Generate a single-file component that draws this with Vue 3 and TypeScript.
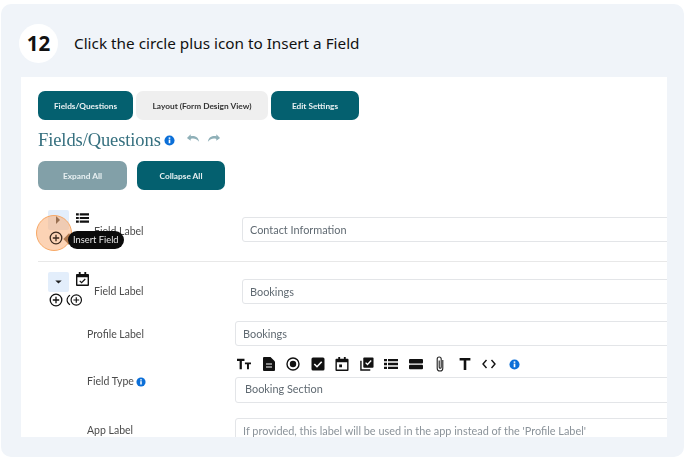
<script setup lang="ts">
const tabs = [
  { label: 'Fields/Questions', cls: 'tab-a' },
  { label: 'Layout (Form Design View)', cls: 'tab-b' },
  { label: 'Edit Settings', cls: 'tab-c' },
]
</script>

<template>
  <div class="page">
    <section class="card">
      <header class="step">
        <div class="badge">12</div>
        <h1 class="title">Click the circle plus icon to Insert a Field</h1>
      </header>
      <main class="panel">
        <nav class="tabs">
          <button v-for="t in tabs" :key="t.label" class="btn" :class="t.cls">{{ t.label }}</button>
        </nav>
        <div class="heading">
          <h2>Fields/Questions</h2>
          <svg class="info" viewBox="0 0 12 12"><circle cx="6" cy="6" r="5.5" fill="#0b6fd8" /><rect x="5.1" y="5" width="1.8" height="4" fill="#fff" /><rect x="5.1" y="2.6" width="1.8" height="1.6" fill="#fff" /></svg>
          <svg class="undo" viewBox="0 0 16 10"><path d="M5 1 1 5l4 3V6c3-1 6-.5 9 3-1-5-4-6.500-9-6z" fill="#8fb0b8" /></svg>
          <svg class="undo redo" viewBox="0 0 16 10"><path d="M5 1 1 5l4 3V6c3-1 6-.5 9 3-1-5-4-6.500-9-6z" fill="#8fb0b8" /></svg>
        </div>
        <div class="actions">
          <button class="btn expand">Expand All</button>
          <button class="btn collapse">Collapse All</button>
        </div>

        <div class="field first">
          <div class="ctrl">
            <div class="toggle"><svg class="caret-r" viewBox="0 0 6 8"><path d="M1 0v8l4-4z" fill="#222" /></svg></div>
            <svg class="type" viewBox="0 0 14 12"><path d="M0 1h3v2.300H0zM4 1h10v2.300H4zM0 4.800h3v2.400H0zM4 4.800h10v2.400H4zM0 8.700h3V11H0zM4 8.700h10V11H4z" fill="#111" /></svg>
          </div>
          <span class="flabel">Field Label</span>
          <div class="input wide">Contact Information</div>
          <div class="halo"></div>
          <svg class="plus plus-hi" viewBox="0 0 14 14"><circle cx="7" cy="7" r="5.800" fill="none" stroke="#3c2a1e" stroke-width="1.300" /><path d="M7 3.800v6.400M3.800 7h6.400" stroke="#3c2a1e" stroke-width="1.300" /></svg>
          <div class="tip">Insert Field</div>
        </div>

        <hr class="sep" />

        <div class="field second">
          <div class="ctrl">
            <div class="toggle"><svg class="caret-d" viewBox="0 0 8 5"><path d="M0 .5h8L4 4.500z" fill="#222" /></svg></div>
            <svg class="type cal" viewBox="0 0 14 15"><path d="M3 0h2v2h4V0h2v2h2a1 1 0 0 1 1 1v11a1 1 0 0 1-1 1H1a1 1 0 0 1-1-1V3a1 1 0 0 1 1-1h2zM1.500 5.500v8h11v-8z" fill="#111" /><path d="m4 9.500 2 2 4-4" fill="none" stroke="#111" stroke-width="1.300" /></svg>
          </div>
          <div class="plusses">
            <svg class="plus" viewBox="0 0 14 14"><circle cx="7" cy="7" r="5.800" fill="none" stroke="#111" stroke-width="1.300" /><path d="M7 3.800v6.400M3.800 7h6.400" stroke="#111" stroke-width="1.300" /></svg>
            <svg class="plus2" viewBox="0 0 19 14"><path d="M4.500 1.500C2.500 2.800 1.200 4.700 1.200 7s1.300 4.200 3.300 5.500" fill="none" stroke="#111" stroke-width="1.200" /><circle cx="11.500" cy="7" r="5.800" fill="none" stroke="#111" stroke-width="1.300" /><path d="M11.500 3.800v6.400M8.300 7h6.400" stroke="#111" stroke-width="1.300" /></svg>
          </div>
          <span class="flabel">Field Label</span>
          <div class="input wide">Bookings</div>
        </div>

        <div class="row profile">
          <label>Profile Label</label>
          <div class="input">Bookings</div>
        </div>

        <div class="palette">
          <svg viewBox="0 0 15 13"><path d="M0 1h8v2.200H5.200V12H2.800V3.200H0zM8.500 5H15v1.800h-2.200V12h-2.100V6.800H8.500z" fill="#111" /></svg>
          <svg viewBox="0 0 12 14"><path d="M0 1a1 1 0 0 1 1-1h6.500L12 4.500V13a1 1 0 0 1-1 1H1a1 1 0 0 1-1-1z" fill="#111" /><path d="M3 7h6M3 10h6" stroke="#fff" stroke-width="1.200" /></svg>
          <svg viewBox="0 0 14 14"><circle cx="7" cy="7" r="6" fill="none" stroke="#111" stroke-width="1.400" /><circle cx="7" cy="7" r="3.200" fill="#111" /></svg>
          <svg viewBox="0 0 14 14"><rect x="0.500" y="0.500" width="13" height="13" rx="1.500" fill="#111" /><path d="m3.300 7 2.700 2.700 4.700-5" fill="none" stroke="#fff" stroke-width="1.600" /></svg>
          <svg viewBox="0 0 14 15"><path d="M3 0h2v2h4V0h2v2h2a1 1 0 0 1 1 1v11a1 1 0 0 1-1 1H1a1 1 0 0 1-1-1V3a1 1 0 0 1 1-1h2zM1.500 5.500v8h11v-8z" fill="#111" /><rect x="4" y="8" width="3" height="3" fill="#111" /></svg>
          <svg viewBox="0 0 15 15"><path d="M1 4v10h10" fill="none" stroke="#111" stroke-width="1.500" /><rect x="3.500" y="0.500" width="11" height="11" rx="1" fill="#111" /><path d="m6 6 2 2 4-4.200" fill="none" stroke="#fff" stroke-width="1.400" /></svg>
          <svg viewBox="0 0 14 12"><path d="M0 1h3v2.300H0zM4 1h10v2.300H4zM0 4.800h3v2.400H0zM4 4.800h10v2.400H4zM0 8.700h3V11H0zM4 8.700h10V11H4z" fill="#111" /></svg>
          <svg viewBox="0 0 14 12"><rect y="1" width="14" height="4.400" rx="1" fill="#111" /><rect y="6.800" width="14" height="4.400" rx="1" fill="#111" /></svg>
          <svg class="clip" viewBox="0 0 10 16"><path d="M7.800 4v8.200a2.800 2.800 0 0 1-5.600 0V3a2 2 0 0 1 4 0v8.300a1 1 0 0 1-2 0V4.500" fill="none" stroke="#222" stroke-width="1.100" /></svg>
          <svg viewBox="0 0 12 13"><path d="M1 1h10v2.200H7.200V12H4.800V3.200H1z" fill="#111" /></svg>
          <svg viewBox="0 0 14 10"><path d="M4.500 1 1 5l3.500 4M9.500 1 13 5 9.500 9" fill="none" stroke="#111" stroke-width="1.400" /></svg>
          <svg class="pinfo" viewBox="0 0 12 12"><circle cx="6" cy="6" r="5.500" fill="#0b6fd8" /><rect x="5.100" y="5" width="1.800" height="4" fill="#fff" /><rect x="5.100" y="2.600" width="1.800" height="1.600" fill="#fff" /></svg>
        </div>

        <div class="row type-row">
          <label>Field Type<svg class="info small" viewBox="0 0 12 12"><circle cx="6" cy="6" r="5.500" fill="#0b6fd8" /><rect x="5.100" y="5" width="1.800" height="4" fill="#fff" /><rect x="5.100" y="2.600" width="1.800" height="1.600" fill="#fff" /></svg></label>
          <div class="input">Booking Section</div>
        </div>

        <div class="row app-row">
          <label>App Label</label>
          <div class="input faint">If provided, this label will be used in the app instead of the 'Profile Label'</div>
        </div>
      </main>
    </section>
  </div>
</template>

<style scoped>
.page { width: 688px; height: 461px; padding: 4px 4px 4px 1px; box-sizing: border-box; overflow: hidden; font-family: "Open Sans", sans-serif; }
.card { height: 453px; background: #f0f4f9; border-radius: 10px; padding: 19px 17px 20px 18px; box-sizing: border-box; display: flex; flex-direction: column; }
.step { display: flex; align-items: center; height: 40px; margin-bottom: 14px; flex: none; }
.badge { width: 39px; height: 39px; border-radius: 50%; background: #fff; display: flex; align-items: center; justify-content: center; font: 700 20.500px "Noto Sans", sans-serif; color: #111; }
.title { margin: 0 0 0 16px; font: 400 15.300px "Noto Sans", sans-serif; color: #111; }
.panel { position: relative; flex: 1; min-height: 0; margin-left: 2px; background: #fff; overflow: hidden; padding: 14px 0 0 17px; filter: blur(0.4px); }
.tabs { display: flex; gap: 3px; }
.btn { border: 0; height: 29px; border-radius: 7px; padding: 0; font: 700 8.300px Lato, sans-serif; color: #e8f0f2; background: #04606f; }
.tab-a { width: 95px; }
.tab-b { width: 132px; background: #efefef; color: #333; }
.tab-c { width: 88px; }
.heading { display: flex; align-items: center; height: 30px; margin-top: 5px; }
.heading h2 { margin: 0; font: 400 18.500px "Liberation Serif", serif; letter-spacing: -0.1px; color: #36707f; }
.info { width: 11px; height: 11px; margin-left: 3.500px; }
.undo { width: 15px; height: 10px; margin-left: 11px; margin-top: -4px; }
.redo { transform: scaleX(-1); margin-left: 5px; }
.info.small { width: 10px; height: 10px; vertical-align: -1.500px; margin-left: 2px; }
.actions { display: flex; gap: 10px; margin-top: 6px; }
.expand { width: 89px; background: #82a0a8; }
.collapse { width: 88px; }
.field { position: relative; display: grid; grid-template-columns: 56px 148px 1fr; }
.first { height: 51px; margin-top: 20px; align-items: start; }
.ctrl { display: flex; align-items: flex-start; grid-column: 1; grid-row: 1; margin-left: 10px; width: 50px; }
.toggle { width: 21px; height: 20px; background: #e3eefb; border-radius: 2px; display: flex; align-items: center; justify-content: center; flex: none; }
.type { width: 13px; height: 12px; margin-left: 7px; margin-top: 2px; }
.cal { height: 14px; margin-top: 0; }
.caret-r { width: 6px; height: 8px; margin-left: -1px; }
.caret-d { width: 7px; height: 4px; }
.flabel { position: absolute; left: 56px; font: 400 10.500px Lato, sans-serif; color: #4c4c4c; }
.first .flabel { top: 15px; }
.second .flabel { top: 23px; }
.input { box-sizing: border-box; height: 25px; border: 1px solid #e3e5e8; border-radius: 3px; padding-left: 7px; font: 400 10.900px/23px Lato, sans-serif; color: #606a72; background: #fff; white-space: nowrap; overflow: hidden; margin-right: -6px; }
.wide { grid-column: 3; grid-row: 1; }
.first .wide { margin-top: 7px; }
.sep { border: 0; border-top: 1px solid #e8e8e8; margin: 0; height: 0; }
.second { padding-top: 17px; box-sizing: border-box; height: 59px; }
.second .ctrl { margin-top: -7px; }
.plusses { position: absolute; left: 11px; top: 31px; display: flex; align-items: center; gap: 3px; }
.plus { width: 14px; height: 14px; display: block; }
.plus2 { width: 17px; height: 14px; display: block; }
.halo { position: absolute; left: -2px; top: 5px; width: 36px; height: 36px; box-sizing: border-box; border-radius: 50%; background: rgba(250, 175, 120, 0.55); border: 1.500px solid #f7a866; }
.plus-hi { position: absolute; left: 11px; top: 21px; }
.tip { position: absolute; left: 30px; top: 21px; height: 18px; padding: 0 5px; background: #0b0b0b; border-radius: 9px; color: #e8e8e8; font: 400 9.300px/18px Lato, sans-serif; }
.tip::before { content: ""; position: absolute; left: -3px; top: 4px; width: 8px; height: 8px; background: #5a3a1e; transform: rotate(45deg); z-index: -1; }
.row { display: grid; grid-template-columns: 197px 1fr; align-items: center; }
.row label { padding-left: 49px; font: 400 10.500px Lato, sans-serif; color: #4c4c4c; }
.profile { height: 25px; }
.palette { display: flex; align-items: center; gap: 10.500px; margin-left: 199px; height: 31px; padding-top: 5px; box-sizing: border-box; }
.palette svg { width: 14px; height: 14px; flex: none; }
.palette .clip { height: 16px; }
.palette .pinfo { width: 11px; height: 11px; margin-left: 2px; }
.type-row { height: 26px; }
.type-row label { align-self: start; margin-top: -2px; }
.type-row .input { height: 26px; line-height: 21px; padding-left: 9px; }
.app-row { margin-top: 15px; }
.app-row label { margin-top: -1px; }
.faint { color: #8b939a; }
</style>
